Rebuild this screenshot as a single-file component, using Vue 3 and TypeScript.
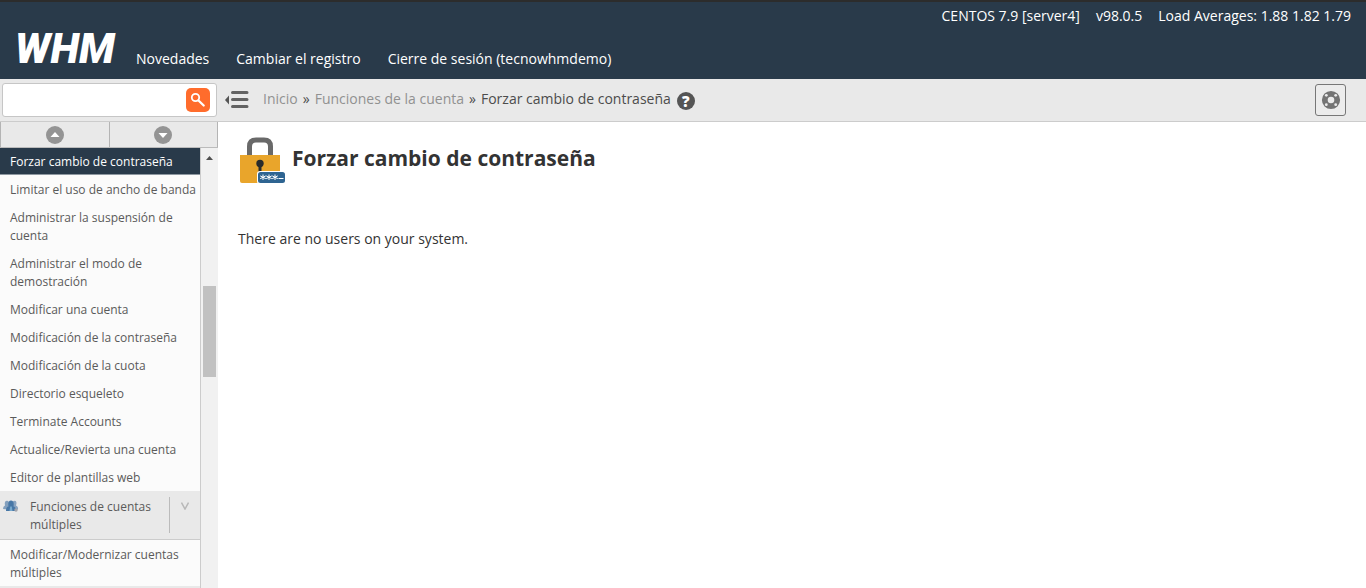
<script setup lang="ts">
import { ref } from 'vue'

const query = ref('')
const stats: string[] = ['CENTOS 7.9 [server4]', 'v98.0.5', 'Load Averages: 1.88 1.82 1.79']
const nav: string[] = ['Novedades', 'Cambiar el registro', 'Cierre de sesión (tecnowhmdemo)']
const accountItems: string[] = [
  'Forzar cambio de contraseña',
  'Limitar el uso de ancho de banda',
  'Administrar la suspensión de cuenta',
  'Administrar el modo de demostración',
  'Modificar una cuenta',
  'Modificación de la contraseña',
  'Modificación de la cuota',
  'Directorio esqueleto',
  'Terminate Accounts',
  'Actualice/Revierta una cuenta',
  'Editor de plantillas web',
]
const active = ref(accountItems[0])
</script>

<template>
  <div class="page">
    <header class="top">
      <ul class="stats">
        <li v-for="s in stats" :key="s">{{ s }}</li>
      </ul>
      <div class="brand-row">
        <a class="logo" href="#">WHM</a>
        <nav class="nav">
          <a v-for="n in nav" :key="n" href="#">{{ n }}</a>
        </nav>
      </div>
    </header>

    <div class="bar">
      <form class="search" role="search" @submit.prevent>
        <input v-model="query" type="text" aria-label="Buscar" />
        <button class="go" type="submit" aria-label="Buscar">
          <svg width="24" height="24" viewBox="0 0 24 24" fill="none" stroke="#fff">
            <circle cx="9.5" cy="9.5" r="3.7" stroke-width="1.8" />
            <path d="M12.5 12.500L17.700 17.500" stroke-width="2.300" stroke-linecap="round" />
          </svg>
        </button>
      </form>
      <button class="collapse" type="button" aria-label="Contraer menú">
        <svg width="24" height="18" viewBox="0 0 24 18">
          <path d="M0 9l4-4.500v9z" fill="#555" />
          <path d="M7.500 1.500h14.500M7.500 8.500h14.500M7.500 15.500h14.500" stroke="#636363" stroke-width="3" stroke-linecap="round" />
        </svg>
      </button>
      <nav class="crumbs" aria-label="Ruta">
        <a href="#">Inicio</a><span>»</span>
        <a href="#">Funciones de la cuenta</a><span>»</span>
        <a class="here" href="#">Forzar cambio de contraseña</a>
      </nav>
      <button class="help" type="button" aria-label="Ayuda">?</button>
      <button class="support" type="button" aria-label="Soporte">
        <svg width="20" height="20" viewBox="0 0 20 20">
          <circle cx="10" cy="10" r="6.2" fill="none" stroke="#747474" stroke-width="5.800" />
          <g fill="#ececec">
            <circle cx="5.300" cy="5.300" r="1.400" />
            <circle cx="14.700" cy="5.300" r="1.400" />
            <circle cx="5.300" cy="14.700" r="1.400" />
            <circle cx="14.700" cy="14.700" r="1.400" />
          </g>
        </svg>
      </button>
    </div>

    <div class="body">
      <aside class="side">
        <div class="movers">
          <button type="button" aria-label="Subir">
            <svg width="18" height="18" viewBox="0 0 18 18">
              <circle cx="9" cy="9" r="9" fill="#949494" />
              <path d="M4.500 11L9 6l4.500 5z" fill="#fff" />
            </svg>
          </button>
          <button type="button" aria-label="Bajar">
            <svg width="18" height="18" viewBox="0 0 18 18">
              <circle cx="9" cy="9" r="9" fill="#949494" />
              <path d="M4.500 7L9 12l4.500-5z" fill="#fff" />
            </svg>
          </button>
        </div>
        <div class="scroller">
          <div class="menu">
            <a
              v-for="item in accountItems"
              :key="item"
              href="#"
              class="item"
              :class="{ active: item === active }"
              @click.prevent="active = item"
            >{{ item }}</a>
            <div class="group">
              <svg class="people" width="16" height="12" viewBox="0 0 16 12">
                <path d="M0 9q0-3 2-3.500Q1 1 4 .8q2.500 0 2 4l1 5z" fill="#829fbd" />
                <path d="M15 9.500q.5-3-2-4Q14.500 1 11.500.8q-2.500 0-2 4l-1 5z" fill="#8aa4c0" />
                <path d="M3 11q0-4.500 2.500-4.500Q4.500.5 8 .5t2.500 6q2.500 0 2.500 4.500z" fill="#4777a6" />
                <path d="M7.200 6.500h1.600l.7 4.500h-3z" fill="#78aace" />
                <circle cx="13" cy="10" r="1.700" fill="#a3a5ad" />
              </svg>
              <a href="#" class="group-name">Funciones de cuentas múltiples</a>
              <button class="toggle" type="button" aria-label="Contraer grupo">
                <svg width="8" height="8" viewBox="0 0 8 8">
                  <path d="M.5.500L4 7 7.500.500" fill="none" stroke="#b8b8b8" stroke-width="1.500" />
                </svg>
              </button>
            </div>
            <a href="#" class="item last">Modificar/Modernizar cuentas múltiples</a>
          </div>
          <div class="track" aria-hidden="true">
            <svg width="7" height="4" viewBox="0 0 7 4"><path d="M0 4L3.500 0 7 4z" fill="#505050" /></svg>
            <div class="thumb"></div>
          </div>
        </div>
      </aside>

      <main class="content">
        <div class="title">
          <svg width="47" height="46" viewBox="0 0 47 46">
            <path d="M9.500 18V9.500Q9.500 3 16 3h8q6.500 0 6.500 6.500V18" fill="none" stroke="#696969" stroke-width="5" />
            <path d="M0 18h40v28H2q-2 0-2-2z" fill="#e9a52b" />
            <circle cx="20" cy="26.500" r="3.700" fill="#292b2c" />
            <path d="M18.500 28h3v7h-3z" fill="#292b2c" />
            <rect x="17" y="34" width="30" height="13" rx="3" fill="#fff" />
            <rect x="18" y="35" width="27" height="11" rx="2.500" fill="#2e6491" />
            <g stroke="#fff" stroke-width="1">
              <path d="M23 37.500v5.500M20.200 38.900l5.600 2.800M25.800 38.900l-5.600 2.800" />
              <path d="M29 37.500v5.500M26.200 38.900l5.600 2.800M31.800 38.900l-5.600 2.800" />
              <path d="M35 37.500v5.500M32.200 38.900l5.600 2.800M37.800 38.900l-5.600 2.800" />
              <path d="M38.500 41.500h5" />
            </g>
          </svg>
          <h1>Forzar cambio de contraseña</h1>
        </div>
        <p>There are no users on your system.</p>
      </main>
    </div>
  </div>
</template>

<style>
body {
  margin: 0;
}
</style>

<style scoped>
.page {
  display: flex;
  flex-direction: column;
  height: 100vh;
  overflow: hidden;
  background: #fff;
  color: #333;
  font: 14px/20px "Open Sans", "Noto Sans", sans-serif;
}
.page * {
  box-sizing: border-box;
}
a {
  color: inherit;
  text-decoration: none;
}
button {
  margin: 0;
  padding: 0;
  border: 0;
  background: none;
  font: inherit;
  color: inherit;
  cursor: pointer;
}
svg {
  display: block;
  flex: none;
}
.top {
  flex: none;
  border-top: 2px solid #2c2c2c;
  padding: 4px 15px 10px;
  background: #293a4a;
  color: #fff;
}
.stats {
  display: flex;
  justify-content: flex-end;
  gap: 16px;
  margin: 0;
  padding: 0;
  list-style: none;
}
.brand-row {
  display: flex;
  align-items: flex-end;
  gap: 20px;
  height: 43px;
}
.logo {
  width: 101px;
  font: italic 900 42px/40px Roboto, sans-serif;
}
.nav {
  display: flex;
  gap: 27px;
}
.bar {
  flex: none;
  display: flex;
  align-items: center;
  height: 43px;
  padding: 0 20px 0 2px;
  border-bottom: 1px solid #ccc;
  background: #e9e9e9;
}
.search {
  display: flex;
  align-items: center;
  flex: none;
  width: 215px;
  height: 34px;
  padding-right: 6px;
  border: 1px solid #c6c6c6;
  border-radius: 3px;
  background: #fff;
}
.search input {
  flex: 1;
  min-width: 0;
  height: 30px;
  padding: 0 8px;
  border: 0;
  outline: 0;
  background: none;
  font: inherit;
}
.go {
  width: 24px;
  height: 24px;
  border-radius: 5px;
  background: #ff6c2c;
}
.collapse {
  margin-left: 8px;
}
.crumbs {
  display: flex;
  margin-left: 14px;
  padding-bottom: 2px;
  color: #4c4c4c;
}
.crumbs a {
  color: #919191;
}
.crumbs span {
  margin: 0 5px;
}
.crumbs .here {
  color: #4c4c4c;
}
.help {
  width: 18px;
  height: 18px;
  margin: 2px auto 0 6px;
  border-radius: 50%;
  background: #555;
  color: #fff;
  font-size: 15px;
  font-weight: 800;
  line-height: 18px;
}
.support {
  display: flex;
  align-items: center;
  justify-content: center;
  width: 31px;
  height: 32px;
  border: 1px solid #777;
  border-radius: 3px;
  background: #ececec;
}
.body {
  flex: 1;
  display: flex;
  min-height: 0;
}
.side {
  flex: none;
  display: flex;
  flex-direction: column;
  width: 218px;
}
.movers {
  flex: none;
  display: flex;
  height: 26px;
  border-bottom: 1px solid #bbb;
  background: #e9e9e9;
}
.movers button {
  flex: 1;
  display: flex;
  align-items: center;
  justify-content: center;
  border-right: 1px solid #b4b4b4;
}
.movers button:first-child {
  border-left: 1px solid #b4b4b4;
}
.scroller {
  flex: 1;
  display: flex;
  min-height: 0;
}
.menu {
  flex: 1;
  overflow: hidden;
  border-right: 1px solid #ccc;
  background: #fbfbfb;
  color: #5a5a5a;
  font-size: 12px;
  line-height: 18px;
}
.item {
  display: block;
  padding: 6px 4px 4px 10px;
}
.item.active {
  padding: 5px 4px 3px 10px;
  border-bottom: 1px solid #8e98a1;
  background: #293a4a;
  color: #fff;
}
.group {
  display: flex;
  align-items: flex-start;
  padding: 6px 0 6px 3px;
  border-bottom: 1px solid #ccc;
  background: #e9e9e9;
}
.people {
  margin-top: 3px;
}
.group-name {
  flex: 1;
  padding: 1px 10px 0 11px;
  margin-bottom: -1px;
}
.toggle {
  align-self: stretch;
  display: flex;
  justify-content: center;
  width: 31px;
  padding-top: 5px;
  border-left: 1px solid #bbb;
}
.item.last {
  border-bottom: 2px solid #e9e9e9;
}
.track {
  flex: none;
  display: flex;
  flex-direction: column;
  align-items: center;
  gap: 126px;
  width: 17px;
  padding-top: 8px;
  background: #f1f1f1;
}
.thumb {
  width: 13px;
  height: 91px;
  background: #c1c1c1;
}
.content {
  flex: 1;
  padding: 15px 20px;
}
.title {
  display: flex;
  align-items: flex-start;
  gap: 5px;
  padding-left: 2px;
}
h1 {
  margin: 7px 0 0;
  font-size: 21px;
  font-weight: 700;
  line-height: 28px;
}
p {
  margin: 46px 0 0;
}
</style>
